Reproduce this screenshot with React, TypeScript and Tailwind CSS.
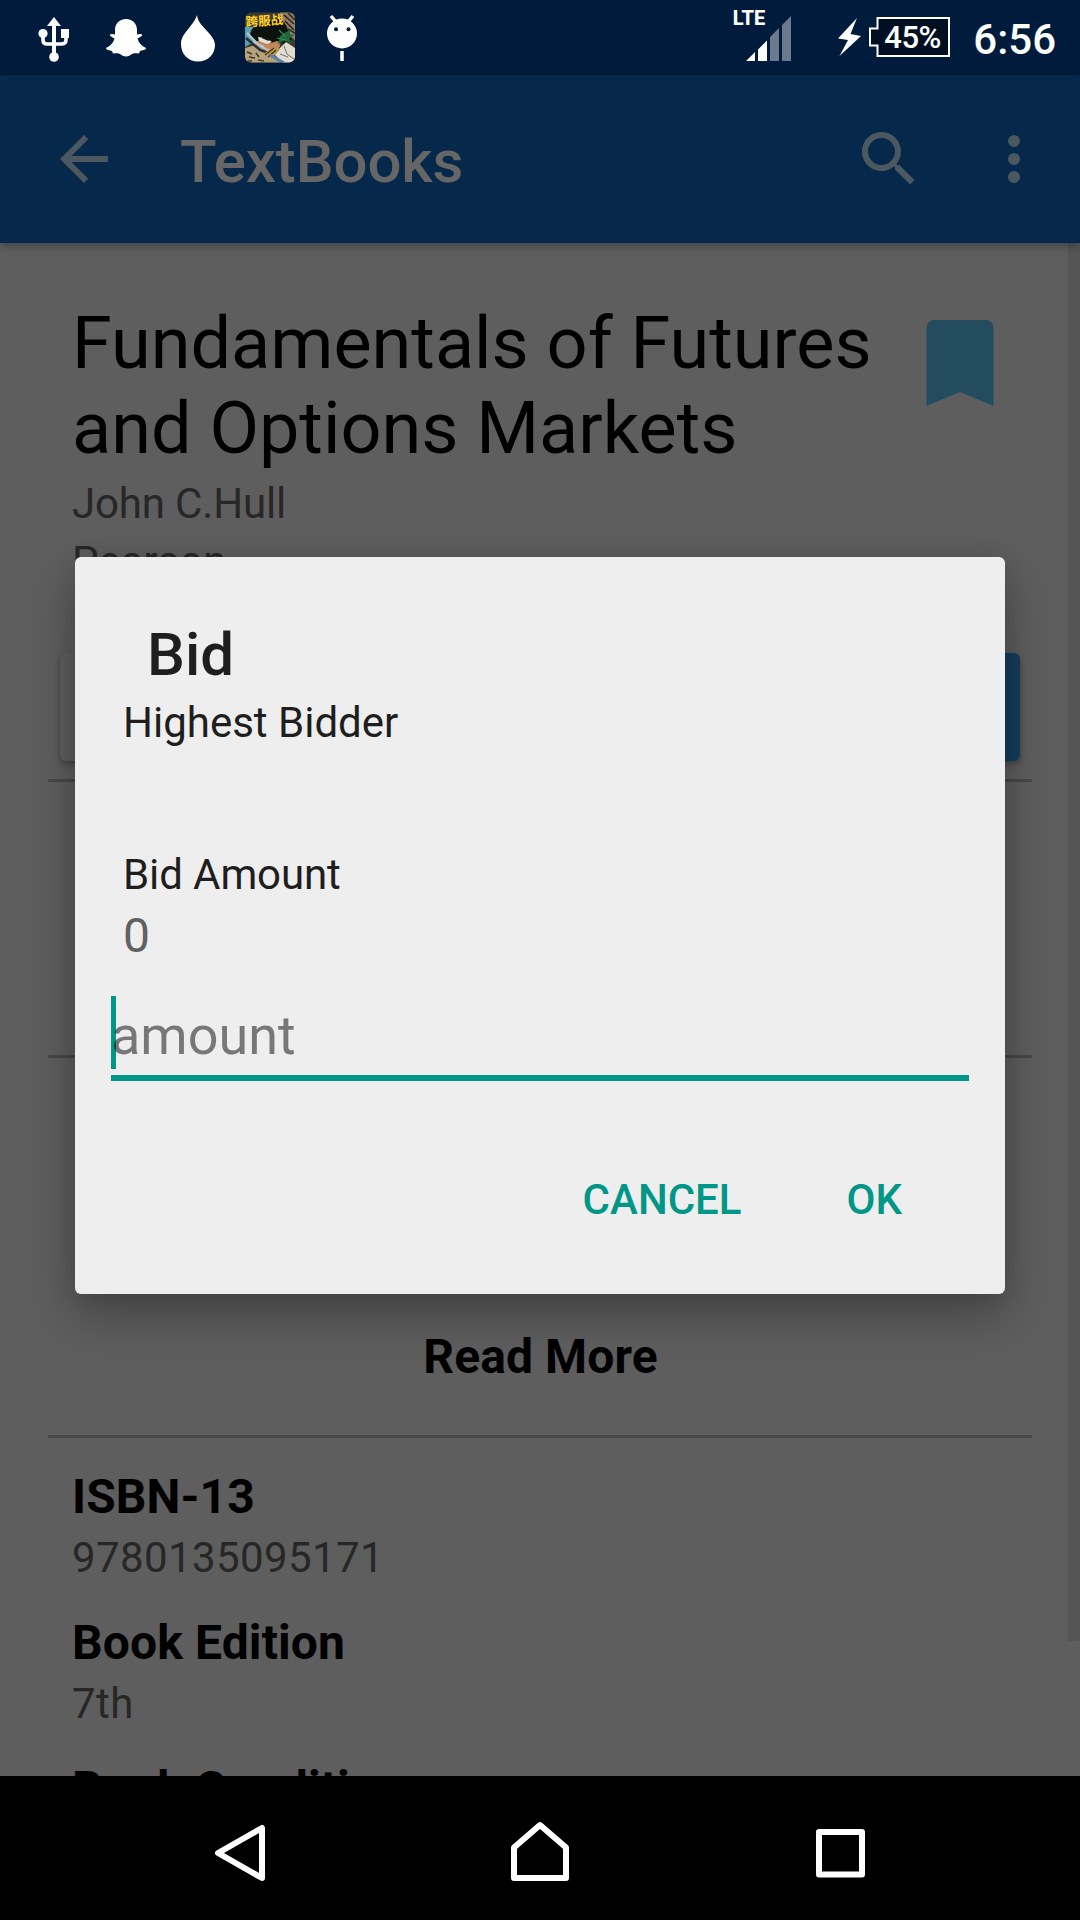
import React from "react";

function StatusBar() {
  return (
    <div className="flex h-[75px] shrink-0 items-start bg-[#001b3b]">
      <svg className="h-[75px] w-[380px] shrink-0" viewBox="0 0 380 75" fill="#fff">
        {/* USB */}
        <path d="M54 17l7 9h-14z" />
        <path d="M52 24h4v30h-4z" />
        <circle cx="54" cy="57" r="4.8" />
        <circle cx="43" cy="33.500" r="4.600" />
        <path d="M61 29h8v9h-8z" />
        <path d="M43 34v6q0 4 4 4h14q5 0 5-4v-6" fill="none" stroke="#fff" strokeWidth="3.600" />
        {/* ghost */}
        <path d="M126 19c7 0 11 5 11 11v4.500c2-.5 4-1 5 0 .8 1.500-2 2.500-4.500 4 1 4 4 7.500 8.500 9.500 0 2-3.500 2.500-6 3-.5 1.500-.5 2.500-2 2.500-2 0-4-.8-6 .5-2 1.500-3.500 2.500-6 2.500s-4-1-6-2.500c-2-1.300-4-.5-6-.5-1.500 0-1.500-1-2-2.500-2.500-.5-6-1-6-3 4.500-2 7.500-5.500 8.500-9.500-2.500-1.500-5.300-2.500-4.500-4 1-1 3-.5 5 0V30c0-6 4-11 11-11z" />
        {/* drop */}
        <path d="M197 15c1 8 6 11 11 17 4 4.500 7 8.500 7 13 0 9-7 16.500-17 16.500s-17-7.500-17-17.500c0-11 12-17 16-29z" />
        {/* game app */}
        <clipPath id="app"><rect x="245" y="12.500" width="50" height="50" rx="6" /></clipPath>
        <g clipPath="url(#app)">
          <rect x="245" y="12" width="50" height="51" fill="#3f3a30" />
          <path d="M280 12h15v28l-12-10z" fill="#8f7f64" />
          <path d="M284 15l10 9M288 13l7 7M285 21l9 9M288 29l7 4" stroke="#2a2119" strokeWidth="1.500" />
          <path d="M245 27h8l2 14-10 6z" fill="#5fa0b4" />
          <path d="M245 48l11-3 25 18h-36z" fill="#b5a27d" />
          <path d="M255 39l12-5 12 5 1 7-5 9-10-3-10-7z" fill="#c08559" />
          <path d="M250 34q2-9 12-10l16-6q8 4 10 12l4 10-8 4-7-3-6 2-7-4-9 3z" fill="#0d120e" />
          <path d="M258 37l8 1 6 4-5 2-8-3z" fill="#e4e0d5" />
          <path d="M262 37l7 3" stroke="#151515" strokeWidth="2" />
          <path d="M280 36l11-7-2 6 6-1-6 5 4 4-9-2-6 3z" fill="#1c6a3a" />
          <path d="M279 30l6 6M277 38l9 2" stroke="#2e9656" strokeWidth="1.200" />
          <path d="M280 48l6-6 9 6v15h-12l-8-8z" fill="#e0dcd0" />
          <path d="M284 46l3 8 7 5M280 54l8 3" stroke="#75706a" strokeWidth="1" fill="none" />
          <path d="M247 33l13 13 10 5M253 42l11 5" stroke="#b4c4ca" strokeWidth="2" fill="none" />
          <path d="M246 38l14 12 8 3" stroke="#23313c" strokeWidth="2.500" fill="none" />
          <path d="M263 54l12-8 5 3-7 8z" fill="#b7964d" />
          <path d="M265 55l9-7M268 57l8-7" stroke="#493617" strokeWidth="1.200" />
          <path d="M270 55l14 8" stroke="#5c83b0" strokeWidth="3" />
          <path d="M247 52l5 2M249 57l6 1M256 53l3 4M258 60l6 1M248 61l4 0" stroke="#463a2a" strokeWidth="1.500" />
          <text x="246" y="26.500" fontSize="12.500" fontWeight="700" fill="#ffd42a" fontFamily="Noto Sans CJK SC, sans-serif" transform="rotate(-4 246 27)">跨服战</text>
        </g>
        {/* android head */}
        <circle cx="342" cy="33.500" r="15" />
        <path d="M331 16l5 6M353 16l-5 6M342 51v10" stroke="#fff" strokeWidth="3.500" fill="none" />
        <circle cx="336" cy="29.300" r="2" fill="#001b3b" />
        <circle cx="348.500" cy="29.300" r="2" fill="#001b3b" />
      </svg>
      <div className="ml-auto flex h-full text-white">
        <span className="mt-[7px] text-[20px] font-extrabold leading-[22px]">LTE</span>
        <svg className="-ml-[19px] h-[75px] w-[46px]" viewBox="746 0 46 75" fill="#fff">
          <path d="M746 61l9-9v9zM758 49.500l9-9V61h-9z" />
          <path d="M770 37l9-9v33h-9zM782 25l9-9v45h-9z" opacity=".42" />
        </svg>
        <svg className="ml-[46px] h-[75px] w-[23px]" viewBox="838 0 23 75" fill="#fff">
          <path d="M857 18L838 38.500l10 1.500-8.500 16L861 36l-10.500-2z" />
        </svg>
        <div className="relative ml-[8px] h-[75px] w-[82px]">
          <svg className="h-[75px] w-[82px]" viewBox="869 0 82 75">
            <path d="M877.500 18H949v38h-71.500V45.500H870v-17h7.500z" fill="#000f22" stroke="#fff" strokeWidth="2" />
          </svg>
          <span className="absolute left-[15px] top-[20px] text-[31px] font-medium leading-[35px] tracking-[-0.5px]">45%</span>
        </div>
        <span className="ml-[22px] mr-[24px] mt-[15px] text-[42px] font-medium leading-[50px]">6:56</span>
      </div>
    </div>
  );
}

function AppBar() {
  return (
    <div className="relative flex h-[168px] shrink-0 items-center bg-[#06284a] pl-[48px] pr-[30px] shadow-[0_3px_8px_rgba(0,0,0,0.3)]">
      <svg className="size-[72px]" viewBox="0 0 24 24" fill="#4c5860">
        <path d="M20 11H7.830l5.590-5.590L12 4l-8 8 8 8 1.410-1.410L7.830 13H20v-2z" />
      </svg>
      <span className="ml-[60px] pt-[5px] text-[60px] font-medium leading-[70px] tracking-[-0.1px] text-[#666]">TextBooks</span>
      <svg className="ml-auto size-[72px]" viewBox="0 0 24 24" fill="#4c5860">
        <path d="M15.500 14h-.79l-.28-.27C15.410 12.590 16 11.110 16 9.500 16 5.910 13.090 3 9.500 3S3 5.910 3 9.500 5.910 16 9.500 16c1.610 0 3.090-.59 4.230-1.570l.27.28v.79l5 4.990L20.490 19l-4.990-5zm-6 0C7.010 14 5 11.990 5 9.500S7.010 5 9.500 5 14 7.010 14 9.500 11.990 14 9.500 14z" />
      </svg>
      <svg className="ml-[53px] size-[72px]" viewBox="0 0 24 24" fill="#4c5860">
        <circle cx="12" cy="6" r="2" />
        <circle cx="12" cy="12" r="2" />
        <circle cx="12" cy="18" r="2" />
      </svg>
    </div>
  );
}

const details = [
  ["ISBN-13", "9780135095171"],
  ["Book Edition", "7th"],
  ["Book Condition", ""],
];

function BookPage() {
  return (
    <div className="flex min-h-0 flex-1 overflow-hidden">
      <div className="flex w-[1068px] shrink-0 flex-col pl-[48px] pr-[36px]">
        <div className="flex h-[232px] shrink-0 items-start justify-between pl-[24px] pr-[38px]">
          <h1 className="w-[830px] pt-[58px] text-[72px] leading-[85px] text-black">
            Fundamentals of Futures and Options Markets
          </h1>
          <svg className="mt-[77px] h-[86px] w-[68px]" viewBox="0 0 68 86" fill="#234c5e">
            <path d="M0.500 86V9Q0.500 0 9 0h50q8.500 0 8.500 9v77L34 72z" />
          </svg>
        </div>
        <div className="h-[178px] shrink-0 pl-[24px] text-[42px] leading-[58px] text-[#272727]">
          <p className="tracking-[-0.15px]">John C.Hull</p>
          <p>Pearson</p>
        </div>
        <div className="ml-[12px] mr-[12px] flex h-[108px] shrink-0 justify-between">
          <div className="w-[470px] rounded-[6px] bg-[#5f5f5f] shadow-[0_3px_6px_rgba(0,0,0,0.3)]" />
          <div className="w-[470px] rounded-[6px] bg-[#173e5c] shadow-[0_3px_6px_rgba(0,0,0,0.3)]" />
        </div>
        <div className="mt-[18px] h-[3px] shrink-0 bg-[#474747]" />
        <div className="mt-[273px] h-[3px] shrink-0 bg-[#474747]" />
        <div className="flex h-[377px] shrink-0 flex-col items-center justify-end pb-[50px]">
          <span className="pl-[1px] text-[48px] font-bold leading-[56px] tracking-[0.1px] text-black">Read More</span>
        </div>
        <div className="h-[3px] shrink-0 bg-[#474747]" />
        <dl className="pl-[24px] pt-[31px]">
          {details.map(([name, value]) => (
            <div key={name} className="h-[146px]">
              <dt className="text-[48px] font-bold leading-[56px] tracking-[0.12px] text-black">{name}</dt>
              <dd className="pt-[8px] text-[42px] leading-[50px] tracking-[0.4px] text-[#272727]">{value}</dd>
            </div>
          ))}
        </dl>
      </div>
      <div className="h-[1398px] w-[12px] bg-[#555]" />
    </div>
  );
}

function BidDialog() {
  return (
    <div className="absolute left-[75px] top-[557px] flex h-[737px] w-[930px] flex-col rounded-[6px] bg-[#eee] px-[36px] text-[#1e1e1e] shadow-[0_20px_48px_rgba(0,0,0,0.3),0_0_20px_rgba(0,0,0,0.08)]">
      <h2 className="pl-[36px] pt-[63px] text-[60px] font-medium leading-[70px]">Bid</h2>
      <p className="pl-[12px] pt-[8px] text-[42px] leading-[50px]">Highest Bidder</p>
      <p className="pl-[12px] pt-[102px] text-[42px] leading-[50px] tracking-[-0.1px]">Bid Amount</p>
      <p className="pl-[12px] pt-[8px] text-[48px] leading-[56px] text-[#616161]">0</p>
      <div className="mt-[32px] flex h-[85px] shrink-0 items-start border-b-[6px] border-[#009688]">
        <div className="h-[73px] w-[5px] bg-[#009688]" />
        <span className="-ml-[5px] pt-[8px] text-[54px] leading-[64px] text-black/50">amount</span>
      </div>
      <div className="mt-[94px] flex justify-end pr-[67px] text-[42px] font-medium leading-[50px] text-[#009688]">
        <span className="mr-[105px]">CANCEL</span>
        <span>OK</span>
      </div>
    </div>
  );
}

const navIcons = [
  { name: "back", viewBox: "211 1821 60 64", d: "M262 1828v50L218 1853z" },
  { name: "home", viewBox: "510 1821 60 64", d: "M514 1878v-30.500L540 1825l26 22.500V1878z" },
  { name: "recents", viewBox: "809 1821 60 64", d: "M819 1832h43v42.500h-43z" },
];

function NavBar() {
  return (
    <div className="relative flex h-[144px] shrink-0 items-start justify-between bg-black px-[211px] pt-[45px]">
      {navIcons.map((icon) => (
        <svg key={icon.name} className="h-[64px] w-[60px]" viewBox={icon.viewBox} fill="none" stroke="#fff" strokeWidth="6" strokeLinejoin="round">
          <path d={icon.d} />
        </svg>
      ))}
    </div>
  );
}

export default function App() {
  return (
    <div className="relative flex h-[1920px] w-[1080px] flex-col overflow-hidden bg-[#5e5e5e] font-['Roboto',sans-serif]">
      <StatusBar />
      <AppBar />
      <BookPage />
      <NavBar />
      <BidDialog />
    </div>
  );
}
